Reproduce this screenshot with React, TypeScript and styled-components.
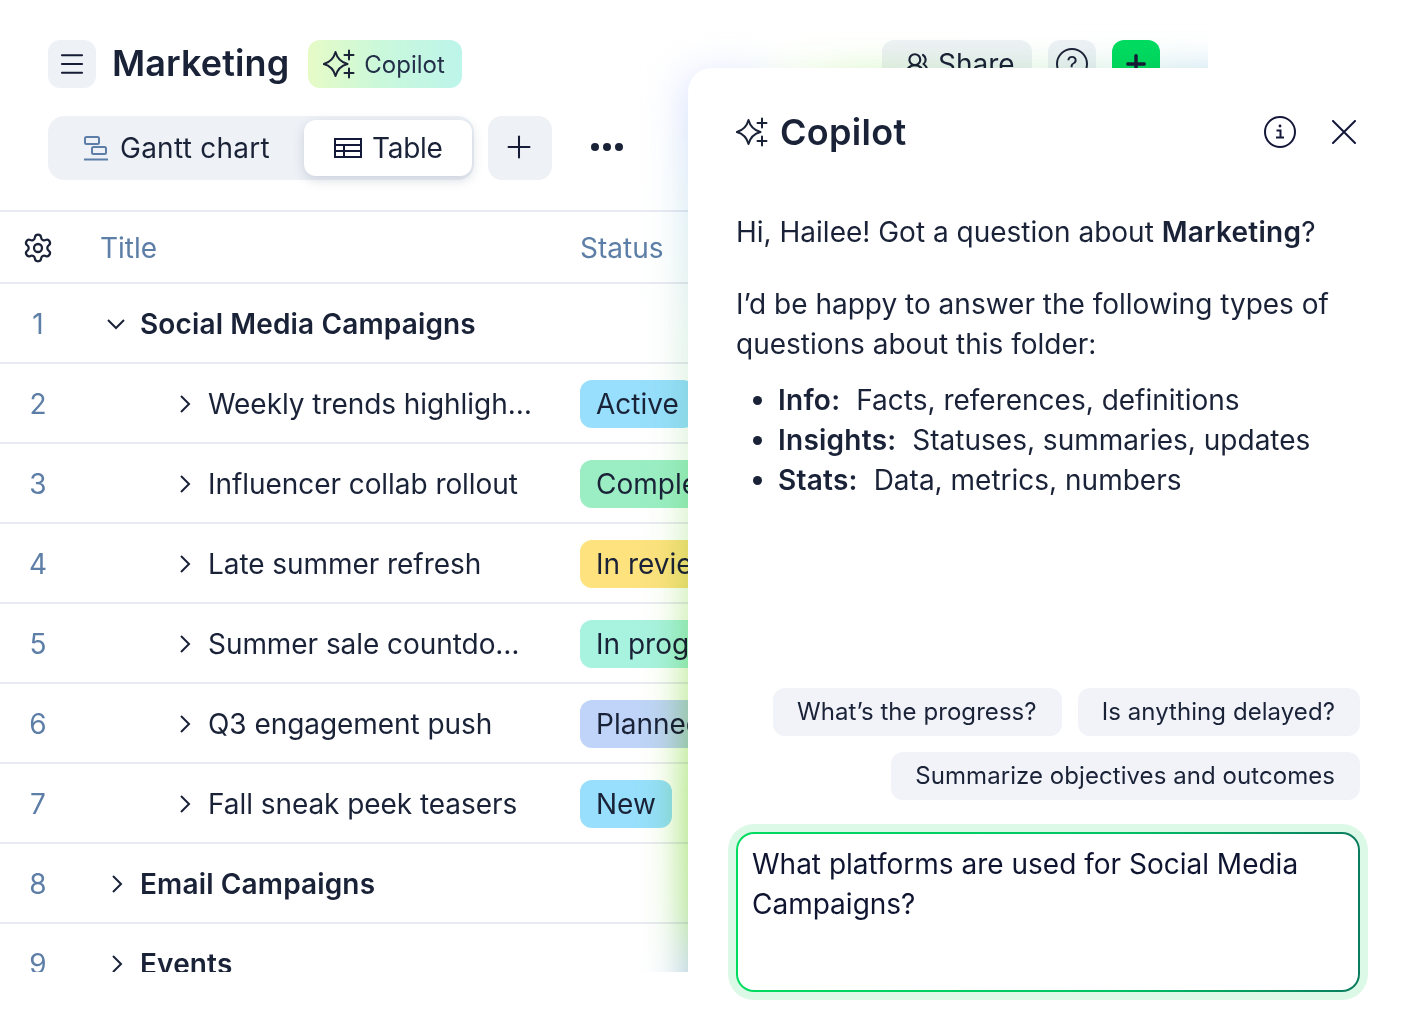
import React from "react";
import styled, { createGlobalStyle } from "styled-components";
import { Menu, Plus, Settings, UsersRound } from "lucide-react";

const Global = createGlobalStyle`
  html, body { margin: 0; padding: 0; background: #fff; }
  body { font-family: Inter, "Noto Sans", sans-serif; color: #1a2238; -webkit-font-smoothing: antialiased; }
`;

const Page = styled.div`
  position: relative;
  width: 1408px;
  height: 1024px;
  overflow: hidden;
  background: #fff;
`;

const Backdrop = styled.div`
  position: relative;
  width: 1208px;
  height: 972px;
  overflow: hidden;
  padding-top: 40px;
  box-sizing: border-box;
`;

const HeaderRow = styled.div`
  display: flex;
  align-items: center;
  height: 48px;
  padding: 0 48px;
`;

const IconSquare = styled.div<{ $tone?: string }>`
  flex: none;
  display: flex;
  align-items: center;
  justify-content: center;
  width: 48px;
  height: 48px;
  border-radius: 12px;
  background: ${(p) => p.$tone ?? "#eef1f6"};
  color: #161c36;
`;

const PageTitle = styled.h1`
  margin: 0 19px 0 16px;
  font-size: 36px;
  line-height: 46px;
  padding-bottom: 2px;
  letter-spacing: 0.1px;
  font-weight: 600;
  color: #1a2238;
`;

const CopilotPill = styled.div`
  display: flex;
  align-items: center;
  gap: 9px;
  height: 48px;
  width: 154px;
  box-sizing: border-box;
  padding-left: 15px;
  border-radius: 12px;
  background: linear-gradient(90deg, #e6fbc6 0%, #c9f8dc 50%, #bdf5ea 100%);
  font-size: 24px;
  color: #24304a;
`;

const HeaderActions = styled.div`
  margin-left: auto;
  display: flex;
  gap: 16px;
`;

const ShareButton = styled.div`
  display: flex;
  align-items: center;
  gap: 8px;
  width: 150px;
  height: 48px;
  box-sizing: border-box;
  padding-left: 22px;
  border-radius: 12px;
  background: #eef1f6;
  font-size: 28px;
  color: #1a2238;
`;

const HelpRing = styled.div`
  width: 32px;
  height: 32px;
  border: 2px solid #1a2238;
  border-radius: 50%;
  box-sizing: border-box;
  display: flex;
  align-items: center;
  justify-content: center;
  font-size: 22px;
  color: #1a2238;
`;

const ToolRow = styled.div`
  display: flex;
  align-items: center;
  height: 64px;
  margin-top: 28px;
  padding-left: 48px;
`;

const Tabs = styled.div`
  display: flex;
  align-items: center;
  width: 426px;
  height: 64px;
  box-sizing: border-box;
  border-radius: 16px;
  background: #eef2f7;
`;

const Tab = styled.div<{ $active?: boolean }>`
  display: flex;
  align-items: center;
  gap: 11px;
  height: 56px;
  box-sizing: border-box;
  font-size: 28px;
  color: #1a2238;
  ${(p) =>
    p.$active
      ? `width: 168px; margin-left: auto; margin-right: 2px; padding-left: 30px; gap: 10px; letter-spacing: -0.3px; background: #fff; border-radius: 12px; box-shadow: 0 4px 12px rgba(60, 75, 110, 0.2);`
      : `padding-left: 35px; letter-spacing: 0.25px;`}
`;

const AddTab = styled(IconSquare)`
  width: 64px;
  height: 64px;
  margin-left: 14px;
  padding: 0 2px 2px 0;
  box-sizing: border-box;
  border-radius: 14px;
`;

const Dots = styled.div`
  display: flex;
  gap: 4px;
  margin: 0 0 2px 39px;
`;

const Dot = styled.span`
  width: 8px;
  height: 8px;
  border-radius: 50%;
  background: #1a2238;
`;

const Table = styled.div`
  margin-top: 30px;
  border-top: 2px solid #e8ebf1;
`;

const Row = styled.div<{ $header?: boolean }>`
  display: grid;
  grid-template-columns: 76px 504px 1fr;
  align-items: center;
  height: ${(p) => (p.$header ? 68 : 76)}px;
  padding-top: 2px;
  border-bottom: 2px solid #e8ebf1;
`;

const NumCell = styled.div`
  text-align: center;
  font-size: 28px;
  color: #5d7ea6;
  display: flex;
  justify-content: center;
`;

const HeadCell = styled.div<{ $pad?: number }>`
  padding-left: ${(p) => p.$pad ?? 0}px;
  font-size: 28px;
  color: #5d7ea6;
`;

const TitleCell = styled.div<{ $level: number }>`
  display: flex;
  align-items: center;
  gap: 12px;
  padding-left: ${(p) => (p.$level ? 96 : 28)}px;
  font-size: 28px;
  font-weight: ${(p) => (p.$level ? 400 : 600)};
  letter-spacing: ${(p) => (p.$level ? "-0.06px" : "0.14px")};
  color: #1a2238;
  white-space: nowrap;
`;

const StatusPill = styled.div<{ $tone: string }>`
  justify-self: start;
  height: 48px;
  line-height: 48px;
  padding: 0 16px;
  border-radius: 12px;
  background: ${(p) => p.$tone};
  font-size: 28px;
  color: #1a2238;
  white-space: nowrap;
`;

const GlowSide = styled.div`
  position: absolute;
  left: 688px;
  top: 80px;
  width: 80px;
  height: 950px;
  filter: blur(22px);
  mix-blend-mode: multiply;
  background: linear-gradient(180deg, #d0daff 0%, #cfe6f0 14%, #d4f0cc 40%, #b8e890 58%, #90dc50 76%, #94da68 88%, #9cbce0 94%);
`;

const GlowTop = styled.div`
  position: absolute;
  left: 740px;
  top: 68px;
  width: 520px;
  height: 60px;
  filter: blur(18px);
  mix-blend-mode: multiply;
  background: linear-gradient(90deg, #ffffff 0%, #d8f6c6 24%, #d8f2dc 62%, #bcdcf6 100%);
`;

const Panel = styled.aside`
  position: absolute;
  left: 688px;
  top: 68px;
  width: 720px;
  height: 956px;
  box-sizing: border-box;
  padding: 40px 48px 32px;
  display: flex;
  flex-direction: column;
  background: #fff;
  border-top-left-radius: 24px;
`;

const PanelHead = styled.div`
  display: flex;
  align-items: center;
  height: 48px;
`;

const PanelTitle = styled.h2`
  margin: 0 0 0 12px;
  font-size: 36px;
  line-height: 48px;
  letter-spacing: 0.3px;
  font-weight: 600;
  color: #1a2238;
`;

const PanelTools = styled.div`
  margin-left: auto;
  display: flex;
  align-items: center;
  gap: 36px;
  margin-right: 4px;
`;

const Message = styled.div`
  flex: 1;
  margin-top: 56px;
  font-size: 28px;
  line-height: 40px;
  color: #1a2238;
  p { margin: 0 0 32px; }
  strong { font-weight: 600; letter-spacing: 0.25px; }
`;

const Bullets = styled.ul`
  margin: -16px 0 0;
  padding-left: 42px;
  li strong { margin-right: 8px; }
`;

const Chips = styled.div`
  display: flex;
  flex-wrap: wrap;
  justify-content: flex-end;
  gap: 16px;
  margin-bottom: 32px;
`;

const Chip = styled.div`
  height: 48px;
  line-height: 48px;
  padding: 0 25px 0 24px;
  border-radius: 12px;
  background: #f1f3f8;
  font-size: 24px;
  letter-spacing: 0.06px;
  color: #1a2238;
`;

const InputBox = styled.div`
  height: 160px;
  box-sizing: border-box;
  padding: 10px 14px;
  border: 2px solid transparent;
  border-radius: 18px;
  background: linear-gradient(#fff, #fff) padding-box, linear-gradient(90deg, #00dc60 0%, #00c564 60%, #0a7d5f 100%) border-box;
  box-shadow: 0 0 0 8px #dbf9e6;
  font-size: 28px;
  line-height: 40px;
  color: #0f1430;
`;

const Sparkle = () => (
  <svg width="32" height="32" viewBox="0 0 32 32" fill="none" stroke="#1a2238" strokeWidth="2" strokeLinejoin="round" strokeLinecap="round">
    <path d="M12.500 4Q15 13.500 24.500 16 15 18.500 12.500 28 10 18.500.8 16 10 13.500 12.500 4Z" />
    <path d="M26 2.500v9M21.500 7h9M26 20.500v9M21.500 25h9" />
  </svg>
);

const GanttIcon = () => (
  <svg width="26" height="26" viewBox="0 0 26 26" fill="none" stroke="#5d7ea6" strokeWidth="2">
    <rect x="2" y="2" width="14" height="7" rx="1.500" />
    <rect x="9" y="12" width="14" height="7" rx="1.500" />
    <path d="M1 24.500h24" />
  </svg>
);

const TableIcon = () => (
  <svg width="28" height="20" viewBox="0 0 28 20" fill="none" stroke="#14183a" strokeWidth="2">
    <rect x="1" y="1" width="26" height="18" />
    <path d="M1 7h26M1 13h26M10 7v12" />
  </svg>
);

const InfoIcon = () => (
  <svg width="32" height="32" viewBox="0 0 32 32" fill="none" stroke="#14183a" strokeWidth="2">
    <circle cx="16" cy="16" r="15" />
    <path d="M12.500 14.500h4v7M12 21.500h8" />
    <circle cx="16" cy="10" r="1.400" fill="#14183a" stroke="none" />
  </svg>
);

const CloseIcon = () => (
  <svg width="24" height="24" viewBox="0 0 24 24" fill="none" stroke="#14183a" strokeWidth="2" strokeLinecap="round">
    <path d="M1 1l22 22M23 1 1 23" />
  </svg>
);

const Chevron = ({ open }: { open?: boolean }) => (
  <svg width="24" height="24" viewBox="0 0 24 24" fill="none" stroke="#1a2238" strokeWidth="2">
    <path d={open ? "M4 8l8 8 8-8" : "M9 4l8 8-8 8"} />
  </svg>
);

const rows = [
  { n: 2, title: "Weekly trends highligh…", status: "Active", tone: "#97dffc" },
  { n: 3, title: "Influencer collab rollout", status: "Completed", tone: "#9beec4" },
  { n: 4, title: "Late summer refresh", status: "In review", tone: "#fde27e" },
  { n: 5, title: "Summer sale countdo…", status: "In progress", tone: "#a8f2e0" },
  { n: 6, title: "Q3 engagement push", status: "Planned", tone: "#bfd4f8" },
  { n: 7, title: "Fall sneak peek teasers", status: "New", tone: "#97dffc" },
];

export default function App() {
  return (
    <Page>
      <Global />
      <Backdrop>
        <HeaderRow>
          <IconSquare><Menu size={30} strokeWidth={1.700} /></IconSquare>
          <PageTitle>Marketing</PageTitle>
          <CopilotPill><Sparkle />Copilot</CopilotPill>
          <HeaderActions>
            <ShareButton><UsersRound size={26} strokeWidth={2} />Share</ShareButton>
            <IconSquare><HelpRing>?</HelpRing></IconSquare>
            <IconSquare $tone="#00dc60"><Plus size={28} strokeWidth={3} /></IconSquare>
          </HeaderActions>
        </HeaderRow>
        <ToolRow>
          <Tabs>
            <Tab><GanttIcon />Gantt chart</Tab>
            <Tab $active><TableIcon />Table</Tab>
          </Tabs>
          <AddTab><Plus size={36} strokeWidth={1.350} /></AddTab>
          <Dots><Dot /><Dot /><Dot /></Dots>
        </ToolRow>
        <Table>
          <Row $header>
            <NumCell><Settings size={32} strokeWidth={1.700} color="#1a2238" /></NumCell>
            <HeadCell $pad={24}>Title</HeadCell>
            <HeadCell>Status</HeadCell>
          </Row>
          <Row>
            <NumCell>1</NumCell>
            <TitleCell $level={0}><Chevron open />Social Media Campaigns</TitleCell>
          </Row>
          {rows.map((r) => (
            <Row key={r.n}>
              <NumCell>{r.n}</NumCell>
              <TitleCell $level={1}><Chevron />{r.title}</TitleCell>
              <StatusPill $tone={r.tone}>{r.status}</StatusPill>
            </Row>
          ))}
          <Row>
            <NumCell>8</NumCell>
            <TitleCell $level={0}><Chevron />Email Campaigns</TitleCell>
          </Row>
          <Row>
            <NumCell>9</NumCell>
            <TitleCell $level={0}><Chevron />Events</TitleCell>
          </Row>
        </Table>
        <GlowSide />
        <GlowTop />
      </Backdrop>
      <Panel>
        <PanelHead>
          <Sparkle />
          <PanelTitle>Copilot</PanelTitle>
          <PanelTools>
            <InfoIcon />
            <CloseIcon />
          </PanelTools>
        </PanelHead>
        <Message>
          <p>Hi, Hailee! Got a question about <strong>Marketing</strong>?</p>
          <p>I’d be happy to answer the following types of questions about this folder:</p>
          <Bullets>
            <li><strong>Info:</strong> Facts, references, definitions</li>
            <li><strong>Insights:</strong> Statuses, summaries, updates</li>
            <li><strong>Stats:</strong> Data, metrics, numbers</li>
          </Bullets>
        </Message>
        <Chips>
          <Chip>What’s the progress?</Chip>
          <Chip>Is anything delayed?</Chip>
          <Chip>Summarize objectives and outcomes</Chip>
        </Chips>
        <InputBox>What platforms are used for Social Media Campaigns?</InputBox>
      </Panel>
    </Page>
  );
}
